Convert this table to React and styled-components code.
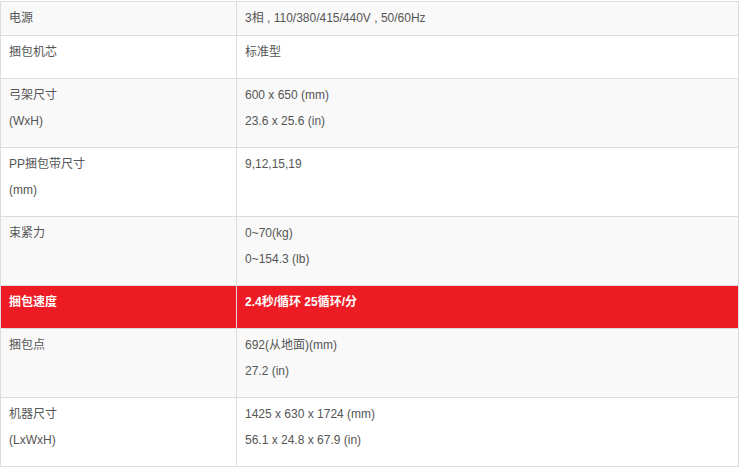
import React from "react";
import styled, { createGlobalStyle } from "styled-components";

const specs = [
  { label: ["电源"], value: ["3相 , 110/380/415/440V , 50/60Hz"], tight: true },
  { label: ["捆包机芯"], value: ["标准型"] },
  { label: ["弓架尺寸", "(WxH)"], value: ["600 x 650 (mm)", "23.6 x 25.6 (in)"] },
  { label: ["PP捆包带尺寸", "(mm)"], value: ["9,12,15,19"] },
  { label: ["束紧力"], value: ["0~70(kg)", "0~154.3 (lb)"] },
  { label: ["捆包速度"], value: ["2.4秒/循环 25循环/分"], hot: true },
  { label: ["捆包点"], value: ["692(从地面)(mm)", "27.2 (in)"] },
  { label: ["机器尺寸", "(LxWxH)"], value: ["1425 x 630 x 1724 (mm)", "56.1 x 24.8 x 67.9 (in)"] },
];

const GlobalStyle = createGlobalStyle`
  html, body {
    margin: 0;
    padding: 0;
    background: #fff;
  }
  body {
    font-family: "Liberation Sans", Arial, "Noto Sans CJK SC", sans-serif;
  }
`;

const Wrap = styled.div`
  padding-top: 1px;
  width: 739px;
`;

const Table = styled.table`
  width: 739px;
  border-collapse: collapse;
  table-layout: fixed;
  font-size: 12px;
  color: #555;
`;

const Row = styled.tr`
  background: ${(p) => (p.$hot ? "#ed1c24" : p.$odd ? "#f9f9f9" : "#fff")};
  color: ${(p) => (p.$hot ? "#fff" : "inherit")};
  font-weight: ${(p) => (p.$hot ? "bold" : "normal")};
`;

const Cell = styled.td`
  border: 1px solid #ddd;
  vertical-align: top;
  box-sizing: border-box;
  height: ${(p) => p.$h}px;
  padding: 3px 8px 0;
  text-align: left;
`;

const Line = styled.div`
  height: 26px;
  line-height: 26px;
  white-space: nowrap;
`;

export default function App() {
  return (
    <Wrap>
      <GlobalStyle />
      <Table>
        <colgroup>
          <col style={{ width: 236 }} />
          <col />
        </colgroup>
        <tbody>
          {specs.map((s, i) => {
            const lines = Math.max(s.label.length, s.value.length);
            const h = s.tight ? 34 : 17 + lines * 26;
            return (
              <Row key={i} $odd={i % 2 === 0} $hot={s.hot}>
                <Cell $h={h}>
                  {s.label.map((t) => (
                    <Line key={t}>{t}</Line>
                  ))}
                </Cell>
                <Cell $h={h}>
                  {s.value.map((t) => (
                    <Line key={t}>{t}</Line>
                  ))}
                </Cell>
              </Row>
            );
          })}
        </tbody>
      </Table>
    </Wrap>
  );
}
